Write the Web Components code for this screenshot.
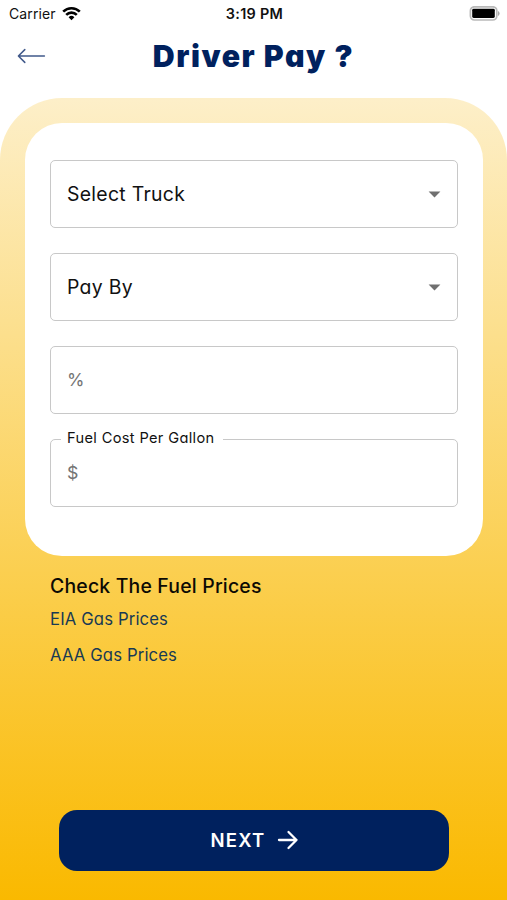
<!DOCTYPE html>
<html lang="en">
<head>
<meta charset="utf-8">
<meta name="viewport" content="width=device-width, initial-scale=1">
<title>Driver Pay</title>
<style>
  body {
    margin: 0;
    background: #fff;
    font-family: Inter, "Open Sans", sans-serif;
    font-feature-settings: "cv11";
  }
</style>
</head>
<body>
<driver-pay-page></driver-pay-page>

<script>
class StatusBar extends HTMLElement {
  constructor() {
    super();
    this.attachShadow({ mode: "open" });
    this.shadowRoot.innerHTML = `
      <style>
        :host {
          display: grid;
          grid-template-columns: 1fr auto 1fr;
          align-items: center;
          height: 28px;
          padding: 0 7px 2px 9px;
          box-sizing: border-box;
          color: #111;
          font-size: 14px;
          font-feature-settings: normal;
        }
        .carrier { display: flex; align-items: center; gap: 6px; letter-spacing: 0.1px; }
        .time { font-size: 14.4px; font-weight: 600; letter-spacing: 0.3px; }
        .battery { justify-self: end; }
        svg { display: block; }
      </style>
      <div class="carrier">
        <span><slot name="carrier"></slot></span>
        <svg width="19" height="15" viewBox="0 0 19 15" fill="none" stroke="#000" stroke-width="2.6">
          <path d="M1.2 5.6a11.8 11.8 0 0 1 16.6 0"/>
          <path d="M4.2 8.8a7.5 7.5 0 0 1 10.6 0"/>
          <path d="M9.5 14.2l-2.9-3a4.1 4.1 0 0 1 5.8 0z" fill="#000" stroke="none"/>
        </svg>
      </div>
      <div class="time"><slot name="time"></slot></div>
      <svg class="battery" width="31" height="15" viewBox="0 0 31 15">
        <rect x="1.4" y=".8" width="26.4" height="13.2" rx="4" fill="#fff" stroke="#b9b9b9" stroke-width="1.7"/>
        <rect x="3.2" y="2.8" width="22.6" height="9.2" rx="1.4" fill="#000"/>
        <path d="M29 5v5q1.6-.8 1.6-2.5T29 5z" fill="#aaa"/>
      </svg>
    `;
  }
}
customElements.define("status-bar", StatusBar);

class PageHeader extends HTMLElement {
  constructor() {
    super();
    this.attachShadow({ mode: "open" });
    this.shadowRoot.innerHTML = `
      <style>
        :host {
          display: grid;
          grid-template-columns: 28px 1fr 28px;
          align-items: center;
          height: 70px;
          padding: 0 17px 14px;
          box-sizing: border-box;
          color: #00215e;
        }
        h1 {
          margin: 0;
          text-align: center;
          font-size: 30.3px;
          line-height: 40px;
          font-weight: 900;
          letter-spacing: 1.55px;
          white-space: nowrap;
        }
        svg { display: block; }
      </style>
      <svg width="29" height="16" viewBox="0 0 29 16" fill="none" stroke="#40598a" stroke-width="1.5" stroke-linecap="round" stroke-linejoin="round">
        <path d="M27.4 8H1.6M7.8 1.6L1.4 8l6.4 6.4"/>
      </svg>
      <h1><slot></slot></h1>
    `;
  }
}
customElements.define("page-header", PageHeader);

class FormField extends HTMLElement {
  constructor() {
    super();
    this.attachShadow({ mode: "open" });
    this.shadowRoot.innerHTML = `
      <style>
        :host {
          display: flex;
          position: relative;
          align-items: center;
          justify-content: space-between;
          height: 68px;
          padding: 0 16px 1px;
          box-sizing: border-box;
          border: 1.5px solid #c8c8c8;
          border-radius: 5px;
          color: #111;
          font-size: 19.4px;
          letter-spacing: 0.3px;
        }
        :host([placeholder]) { padding-bottom: 2px; color: #747474; font-size: 17.8px; }
        .label {
          position: absolute;
          left: 10px;
          top: -12px;
          width: 162px;
          padding-left: 6px;
          box-sizing: border-box;
          background: #fff;
          color: #111;
          font-size: 14.6px;
          line-height: 20px;
          letter-spacing: 0.35px;
          white-space: nowrap;
        }
        .arrow, .label { display: none; }
        .arrow { padding-top: 2px; }
        :host([select]) .arrow, :host([labelled]) .label { display: block; }
      </style>
      <span class="label"><slot name="label"></slot></span>
      <span class="value"><slot></slot></span>
      <svg class="arrow" width="13" height="7" viewBox="0 0 13 7"><path d="M.6.4h11.8L6.5 6.5z" fill="#707070"/></svg>
    `;
  }
}
customElements.define("form-field", FormField);

class FormCard extends HTMLElement {
  constructor() {
    super();
    this.attachShadow({ mode: "open" });
    this.shadowRoot.innerHTML = `
      <style>
        :host {
          display: flex;
          flex-direction: column;
          gap: 25px;
          height: 432.5px;
          padding: 37px 24.5px 0 25px;
          box-sizing: border-box;
          border-radius: 37px;
          background: #fff;
        }
      </style>
      <slot></slot>
    `;
  }
}
customElements.define("form-card", FormCard);

class FuelLinks extends HTMLElement {
  constructor() {
    super();
    this.attachShadow({ mode: "open" });
    this.shadowRoot.innerHTML = `
      <style>
        :host { display: block; padding: 14.5px 25px 0; }
        h2 {
          margin: 0;
          color: #0c0a04;
          font-size: 19.4px;
          line-height: 32px;
          font-weight: 500;
          letter-spacing: 0.2px;
        }
        ::slotted(a) {
          display: block;
          color: #183a54;
          font-size: 16.7px;
          line-height: 35.5px;
          letter-spacing: 0.13px;
          text-decoration: none;
        }
      </style>
      <h2><slot name="title"></slot></h2>
      <slot></slot>
    `;
  }
}
customElements.define("fuel-links", FuelLinks);

class NextButton extends HTMLElement {
  constructor() {
    super();
    this.attachShadow({ mode: "open" });
    this.shadowRoot.innerHTML = `
      <style>
        :host { display: block; margin: auto 33.5px 29.5px 34px; }
        button {
          display: flex;
          align-items: center;
          justify-content: center;
          gap: 12px;
          width: 100%;
          height: 61px;
          padding: 0 0 0 2px;
          border: 0;
          border-radius: 18px;
          background: #00215e;
          color: #fff;
          font: 600 18.5px Inter, sans-serif;
          letter-spacing: 1.2px;
        }
      </style>
      <button type="button">
        <slot></slot>
        <svg width="22" height="20" viewBox="0 0 22 20" fill="none" stroke="#fff" stroke-width="2.3" stroke-linecap="round" stroke-linejoin="round">
          <path d="M2 10h17.5M11.5 2l8 8-8 8"/>
        </svg>
      </button>
    `;
  }
}
customElements.define("next-button", NextButton);

class DriverPayPage extends HTMLElement {
  constructor() {
    super();
    this.attachShadow({ mode: "open" });
    this.shadowRoot.innerHTML = `
      <style>
        :host {
          display: flex;
          flex-direction: column;
          height: 900px;
          overflow: hidden;
        }
        main {
          display: flex;
          flex: 1;
          flex-direction: column;
          padding: 25px 24.5px 0 25px;
          border-radius: 62px 62px 0 0;
          background: linear-gradient(#fdefc9, #fbcf50 59%, #fab900);
        }
      </style>
      <status-bar>
        <span slot="carrier">Carrier</span>
        <span slot="time">3:19 PM</span>
      </status-bar>
      <page-header>Driver Pay ?</page-header>
      <main>
        <form-card>
          <form-field select>Select Truck</form-field>
          <form-field select>Pay By</form-field>
          <form-field placeholder>%</form-field>
          <form-field placeholder labelled><span slot="label">Fuel Cost Per Gallon</span>$</form-field>
        </form-card>
        <fuel-links>
          <span slot="title">Check The Fuel Prices</span>
          <a href="#">EIA Gas Prices</a>
          <a href="#">AAA Gas Prices</a>
        </fuel-links>
        <next-button>NEXT</next-button>
      </main>
    `;
  }
}
customElements.define("driver-pay-page", DriverPayPage);
</script>
</body>
</html>
